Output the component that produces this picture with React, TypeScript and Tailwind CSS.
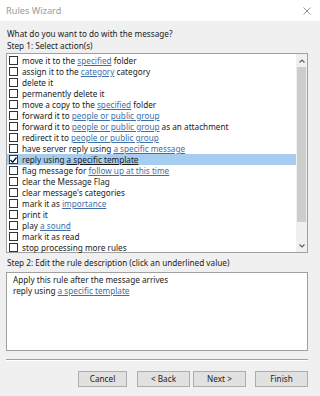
import React from 'react';

const font = { fontFamily: '"Noto Sans", "Segoe UI", Arial, sans-serif' };

type Part = string | { link: string };

const actions: { parts: Part[]; checked?: boolean }[] = [
    { parts: ['move it to the ', { link: 'specified' }, ' folder'] },
    { parts: ['assign it to the ', { link: 'category' }, ' category'] },
    { parts: ['delete it'] },
    { parts: ['permanently delete it'] },
    { parts: ['move a copy to the ', { link: 'specified' }, ' folder'] },
    { parts: ['forward it to ', { link: 'people or public group' }] },
    { parts: ['forward it to ', { link: 'people or public group' }, ' as an attachment'] },
    { parts: ['redirect it to ', { link: 'people or public group' }] },
    { parts: ['have server reply using ', { link: 'a specific message' }] },
    { parts: ['reply using ', { link: 'a specific template' }], checked: true },
    { parts: ['flag message for ', { link: 'follow up at this time' }] },
    { parts: ['clear the Message Flag'] },
    { parts: ["clear message's categories"] },
    { parts: ['mark it as ', { link: 'importance' }] },
    { parts: ['print it'] },
    { parts: ['play ', { link: 'a sound' }] },
    { parts: ['mark it as read'] },
    { parts: ['stop processing more rules'] },
];

const Link = ({ children, dark }: { children: React.ReactNode; dark?: boolean }) => (
    <span className={`underline underline-offset-[1px] ${dark ? 'text-[#1b1b1b]' : 'text-[#3d6fa8]'}`}>{children}</span>
);

const Button = ({ label }: { label: string }) => (
    <button className="h-[16px] w-[53px] bg-[#e1e1e1] border border-[#adadad] text-[8.2px] leading-none text-[#1b1b1b]">
        {label}
    </button>
);

export default function App() {
    return (
        <div className="w-[320px] h-[396px] bg-[#f0f0f0] text-[#1b1b1b] text-[8.2px] flex flex-col overflow-hidden" style={font}>
            {/* Title bar */}
            <div className="h-[21px] bg-white flex items-center justify-between pl-[6px] pr-[9px] shrink-0">
                <span className="text-[#9a9a9a] text-[9.2px]">Rules Wizard</span>
                <svg width="8" height="8" viewBox="0 0 8 8">
                    <path d="M0.5 0.5 L7.5 7.5 M7.5 0.5 L0.5 7.5" stroke="#8a8a8a" strokeWidth="0.9" />
                </svg>
            </div>

            <div className="flex flex-col pl-[6px] pr-[12px] pt-[7px]">
                <div className="h-[12px] leading-[12px] pl-[1px]">What do you want to do with the message?</div>
                <div className="h-[12px] leading-[12px] pl-[1px]">Step 1: Select action(s)</div>

                {/* Actions list */}
                <div className="mt-[1px] h-[200px] bg-white border border-[#a0a0a0] flex">
                    <div className="flex-1 flex flex-col pt-[1px]">
                        {actions.map((a, i) => (
                            <div
                                key={i}
                                className={`h-[11px] flex items-center pl-[2px] whitespace-nowrap ${a.checked ? 'bg-[#a6cdf0]' : ''}`}
                            >
                                <div className="w-[9px] h-[9px] border border-[#333] bg-white flex items-center justify-center shrink-0 mr-[4px]">
                                    {a.checked && (
                                        <svg width="7" height="6" viewBox="0 0 7 6">
                                            <path d="M0.5 3 L2.7 5.2 L6.5 0.5" stroke="#000" strokeWidth="1.2" fill="none" />
                                        </svg>
                                    )}
                                </div>
                                <span className="leading-[11px]">
                                    {a.parts.map((p, j) =>
                                        typeof p === 'string' ? <span key={j}>{p}</span> : <Link key={j} dark={a.checked}>{p.link}</Link>
                                    )}
                                </span>
                            </div>
                        ))}
                    </div>
                    {/* Scrollbar */}
                    <div className="w-[11px] bg-[#f0f0f0] flex flex-col items-center">
                        <div className="h-[13px] flex items-center justify-center">
                            <svg width="6" height="4" viewBox="0 0 6 4">
                                <path d="M0.5 3.5 L3 1 L5.5 3.5" stroke="#606060" strokeWidth="1.2" fill="none" />
                            </svg>
                        </div>
                        <div className="w-[9px] h-[155px] bg-[#cdcdcd]" />
                        <div className="flex-1" />
                        <div className="h-[13px] flex items-center justify-center">
                            <svg width="6" height="4" viewBox="0 0 6 4">
                                <path d="M0.5 0.5 L3 3 L5.5 0.5" stroke="#606060" strokeWidth="1.2" fill="none" />
                            </svg>
                        </div>
                    </div>
                </div>

                <div className="mt-[4px] h-[12px] leading-[12px] pl-[1px]">Step 2: Edit the rule description (click an underlined value)</div>

                {/* Description */}
                <div className="mt-[3px] h-[79px] bg-white border border-[#a0a0a0] pl-[6px] pt-[1px]">
                    <div className="h-[11px] leading-[11px]">Apply this rule after the message arrives</div>
                    <div className="h-[11px] leading-[11px]">
                        reply using <Link>a specific template</Link>
                    </div>
                </div>

                <div className="mt-[8px] border-t border-[#a0a0a0] border-b border-b-white" />

                {/* Buttons */}
                <div className="mt-[10px] flex items-center pl-[72px]">
                    <Button label="Cancel" />
                    <div className="ml-[10px]"><Button label="< Back" /></div>
                    <div className="ml-[3px]"><Button label="Next >" /></div>
                    <div className="ml-[9px]"><Button label="Finish" /></div>
                </div>
            </div>
        </div>
    );
}
